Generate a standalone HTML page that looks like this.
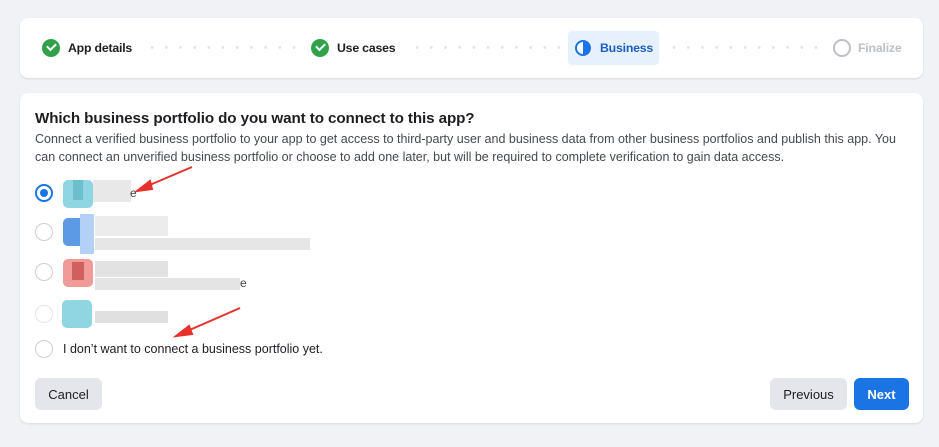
<!DOCTYPE html>
<html><head><style>
body{margin:0;width:939px;height:447px;background:#f0f2f5;font-family:"Liberation Sans",Arial,sans-serif;position:relative;overflow:hidden;color:#1c1e21}
.card{position:absolute;background:#fff;border-radius:8px;box-shadow:0 1px 2px rgba(0,0,0,.1)}
.step{position:absolute;top:38px;height:20px;display:flex;align-items:center;font-size:12.3px;font-weight:bold;letter-spacing:-0.2px}
.chk{width:18px;height:18px;border-radius:50%;background:#31a24c;display:inline-block;margin-right:8px;position:relative}
.chk:after{content:"";position:absolute;left:5px;top:4px;width:7px;height:4px;border-left:2px solid #fff;border-bottom:2px solid #fff;transform:rotate(-45deg)}
.dots{position:absolute;top:46px;height:3px;background:radial-gradient(circle,#e0e2e5 1.2px,transparent 1.6px) 0 0/14.2px 3px repeat-x}
.radio{position:absolute;left:35px;width:18px;height:18px;border:1.5px solid #ccd0d5;border-radius:50%;box-sizing:border-box}
.btn{position:absolute;top:378px;height:32px;border-radius:6px;font-size:13px;display:flex;align-items:center;justify-content:center}
.b{position:absolute}
</style></head><body>
<div class="card" style="left:20px;top:18px;width:903px;height:60px"></div>
<div class="step" style="left:42px"><span class="chk"></span>App details</div>
<div class="dots" style="left:145px;width:155px"></div>
<div class="step" style="left:311px"><span class="chk"></span>Use cases</div>
<div class="dots" style="left:410px;width:150px"></div>
<div style="position:absolute;left:568px;top:31px;width:91px;height:34px;background:#e7f0fd;border-radius:4px"></div>
<div class="step" style="left:575px;color:#1b5fc1"><span style="width:16px;height:16px;border:2px solid #1b74e4;border-radius:50%;box-sizing:border-box;margin-right:9px;background:linear-gradient(90deg,#fff 50%,#1b74e4 50%)"></span>Business</div>
<div class="dots" style="left:667px;width:160px"></div>
<div class="step" style="left:833px;color:#bcc0c4"><span style="width:18px;height:18px;border:2px solid #bcc0c4;border-radius:50%;box-sizing:border-box;margin-right:7px"></span>Finalize</div>

<div class="card" style="left:20px;top:93px;width:903px;height:330px"></div>
<div style="position:absolute;left:35px;top:110px;font-size:15.2px;font-weight:bold;letter-spacing:-0.1px">Which business portfolio do you want to connect to this app?</div>
<div style="position:absolute;left:35px;top:130px;width:880px;font-size:12.5px;line-height:18px;color:#444950">Connect a verified business portfolio to your app to get access to third-party user and business data from other business portfolios and publish this app. You can connect an unverified business portfolio or choose to add one later, but will be required to complete verification to gain data access.</div>

<div class="radio" style="top:184px;border:2px solid #1b74e4"><div style="position:absolute;left:3px;top:3px;width:8px;height:8px;border-radius:50%;background:#1b74e4"></div></div>
<div class="b" style="left:63px;top:180px;width:30px;height:28px;background:#8fd6e2;border-radius:5px"></div>
<div class="b" style="left:73px;top:180px;width:10px;height:20px;background:#6cbfcd"></div>
<div class="b" style="left:93px;top:180px;width:38px;height:22px;background:#e8e8e8"></div>
<div class="b" style="left:130px;top:186px;font-size:12px;color:#444">e</div>

<div class="radio" style="top:223px"></div>
<div class="b" style="left:63px;top:218px;width:30px;height:28px;background:#5d9ae6;border-radius:5px"></div>
<div class="b" style="left:80px;top:214px;width:14px;height:40px;background:#b3d1f7"></div>
<div class="b" style="left:95px;top:216px;width:73px;height:20px;background:#ececec"></div>
<div class="b" style="left:95px;top:238px;width:215px;height:12px;background:#e6e6e6"></div>

<div class="radio" style="top:263px"></div>
<div class="b" style="left:63px;top:259px;width:30px;height:28px;background:#f19b98;border-radius:5px"></div>
<div class="b" style="left:72px;top:262px;width:12px;height:18px;background:#d06060"></div>
<div class="b" style="left:95px;top:261px;width:73px;height:16px;background:#e2e2e2"></div>
<div class="b" style="left:95px;top:278px;width:145px;height:12px;background:#e4e4e4"></div>
<div class="b" style="left:240px;top:276px;font-size:12px;color:#444">e</div>

<div class="radio" style="top:305px;border-color:#e4e6e9"></div>
<div class="b" style="left:62px;top:300px;width:30px;height:28px;background:#8fd6e2;border-radius:5px"></div>
<div class="b" style="left:95px;top:311px;width:73px;height:12px;background:#e0e0e0"></div>

<div class="radio" style="top:340px"></div>
<div class="b" style="left:63px;top:342px;font-size:12.5px;color:#1c1e21">I don’t want to connect a business portfolio yet.</div>

<svg style="position:absolute;left:0;top:0" width="939" height="447"><g fill="#e8312a" stroke="#e8312a" stroke-width="2"><line x1="192" y1="167" x2="145" y2="187"/><polygon points="137,191 150,181 152,189"/><line x1="240" y1="308" x2="185" y2="332"/><polygon points="176,336 189,326 192,334"/></g></svg>

<div class="btn" style="left:35px;width:67px;background:#e4e6eb">Cancel</div>
<div class="btn" style="left:770px;width:77px;background:#e4e6eb">Previous</div>
<div class="btn" style="left:854px;width:55px;background:#1b74e4;color:#fff;font-weight:bold">Next</div>
</body></html>
